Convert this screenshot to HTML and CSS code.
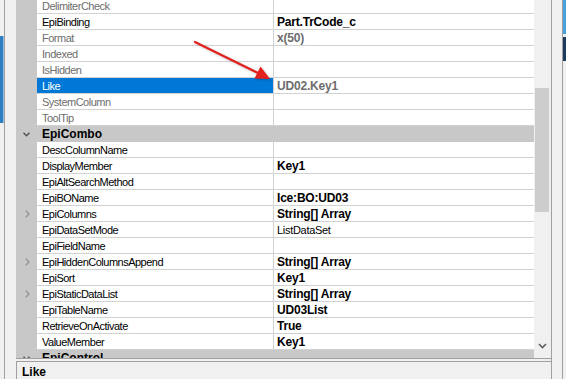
FILE: index.html
```html
<!DOCTYPE html>
<html lang="en">
<head>
  <meta charset="UTF-8" />
  <title>Properties</title>
  <link rel="stylesheet" href="styles.css">
</head>
<body>
  <div class="app">
    <div class="edge-left"><div class="peek"></div></div>
    <div class="gutter"></div>

    <div class="main">
      <div class="grid-wrap">
        <div class="grid">
          <div class="rows">
            <div class="row dim"><div class="mark"></div><div class="name">DelimiterCheck</div><div class="val"></div></div>
            <div class="row"><div class="mark"></div><div class="name">EpiBinding</div><div class="val bold">Part.TrCode_c</div></div>
            <div class="row dim"><div class="mark"></div><div class="name">Format</div><div class="val bold">x(50)</div></div>
            <div class="row dim"><div class="mark"></div><div class="name">Indexed</div><div class="val"></div></div>
            <div class="row dim"><div class="mark"></div><div class="name">IsHidden</div><div class="val"></div></div>
            <div class="row dim sel"><div class="mark"></div><div class="name">Like</div><div class="val bold">UD02.Key1</div></div>
            <div class="row dim"><div class="mark"></div><div class="name">SystemColumn</div><div class="val"></div></div>
            <div class="row dim"><div class="mark"></div><div class="name">ToolTip</div><div class="val"></div></div>

            <div class="row cat">
              <div class="mark"><svg width="7" height="5" viewBox="0 0 7 5"><path d="M0.5 0.8 L3.5 3.8 L6.5 0.8" fill="none" stroke="#505050" stroke-width="1.3"/></svg></div>
              <div class="cat-name">EpiCombo</div>
            </div>
            <div class="row old"><div class="mark"></div><div class="name">DescColumnName</div><div class="val"></div></div>
            <div class="row old"><div class="mark"></div><div class="name">DisplayMember</div><div class="val bold">Key1</div></div>
            <div class="row old"><div class="mark"></div><div class="name">EpiAltSearchMethod</div><div class="val"></div></div>
            <div class="row old"><div class="mark"></div><div class="name">EpiBOName</div><div class="val bold">Ice:BO:UD03</div></div>
            <div class="row old"><div class="mark"><svg class="more" width="5" height="8" viewBox="0 0 5 8"><path d="M0.8 0.6 L4 4 L0.8 7.4" fill="none" stroke="#8c8c8c" stroke-width="1.2"/></svg></div><div class="name">EpiColumns</div><div class="val bold">String[] Array</div></div>
            <div class="row old"><div class="mark"></div><div class="name">EpiDataSetMode</div><div class="val">ListDataSet</div></div>
            <div class="row old"><div class="mark"></div><div class="name">EpiFieldName</div><div class="val"></div></div>
            <div class="row old"><div class="mark"><svg class="more" width="5" height="8" viewBox="0 0 5 8"><path d="M0.8 0.6 L4 4 L0.8 7.4" fill="none" stroke="#8c8c8c" stroke-width="1.2"/></svg></div><div class="name">EpiHiddenColumnsAppend</div><div class="val bold">String[] Array</div></div>
            <div class="row old"><div class="mark"></div><div class="name">EpiSort</div><div class="val bold">Key1</div></div>
            <div class="row old"><div class="mark"><svg class="more" width="5" height="8" viewBox="0 0 5 8"><path d="M0.8 0.6 L4 4 L0.8 7.4" fill="none" stroke="#8c8c8c" stroke-width="1.2"/></svg></div><div class="name">EpiStaticDataList</div><div class="val bold">String[] Array</div></div>
            <div class="row old"><div class="mark"></div><div class="name">EpiTableName</div><div class="val bold">UD03List</div></div>
            <div class="row old"><div class="mark"></div><div class="name">RetrieveOnActivate</div><div class="val bold">True</div></div>
            <div class="row old"><div class="mark"></div><div class="name">ValueMember</div><div class="val bold">Key1</div></div>

            <div class="row cat">
              <div class="mark"><svg width="7" height="5" viewBox="0 0 7 5"><path d="M0.5 0.8 L3.5 3.8 L6.5 0.8" fill="none" stroke="#505050" stroke-width="1.3"/></svg></div>
              <div class="cat-name">EpiControl</div>
            </div>
          </div>
        </div>

        <div class="scroll">
          <div class="thumb"></div>
          <div class="down"><svg width="9" height="6" viewBox="0 0 9 6"><path d="M1 1 L4.5 4.5 L8 1" fill="none" stroke="#606060" stroke-width="1.6"/></svg></div>
        </div>
      </div>

      <div class="desc">Like</div>
    </div>

    <div class="edge-right"></div>
    <div class="peek-right">
      <div class="pr-light"></div>
      <div class="pr-dark"></div>
    </div>
  </div>

  <!-- annotation arrow drawn over the grid -->
  <svg class="arrow" width="566" height="379" viewBox="0 0 566 379">
    <line x1="195" y1="42" x2="259" y2="73.5" stroke="#e3201b" stroke-width="2.2" stroke-linecap="round"/>
    <polygon points="270,79 254.5,78.5 260.5,66.5" fill="#e3201b"/>
  </svg>
</body>
</html>
```

FILE: styles.css
```css
body { margin: 0; background: #f0f0f0; font-family: "Liberation Sans", Arial, sans-serif; font-size: 11px; color: #000; overflow: hidden; }
.app { display: flex; width: 566px; height: 379px; }

.edge-left { width: 4px; padding-top: 36px; border-right: 1px solid #a0a0a0; }
.peek { height: 87px; background: #2f7fc0; border-right: 1px solid #8cc0e6; }
.gutter { width: 11px; }

.main { width: 535px; display: flex; flex-direction: column; border-right: 1px solid #a0a0a0; }
.grid-wrap { display: flex; height: 358px; border-bottom: 1px solid #a0a0a0; flex: none; }
.grid { width: 518px; overflow: hidden; background: #fff; }
.rows { margin-top: -2px; }

.row { display: flex; height: 16px; }
.mark { width: 21px; flex: none; background: #c8c8c8; display: flex; align-items: center; justify-content: center; }
.mark .more { margin-left: 1px; }
.name { width: 237px; flex: none; box-sizing: border-box; padding: 1px 0 0 5px; border-right: 1px solid #d2d2d2; border-bottom: 1px solid #d2d2d2; line-height: 14px; letter-spacing: -0.5px; white-space: nowrap; }
.val { flex: 1; padding: 1px 0 0 3px; border-bottom: 1px solid #d2d2d2; line-height: 14px; letter-spacing: -0.3px; white-space: nowrap; }
.val.bold { font-weight: bold; font-size: 12px; letter-spacing: -0.2px; }
.dim .name, .dim .val { color: #6d6d6d; }
.sel .name { background: #0078d7; color: #fff; }

.cat { background: #c8c8c8; }
.cat-name { padding: 1px 0 0 5px; font-weight: bold; font-size: 12px; line-height: 14px; border-bottom: 1px solid #c8c8c8; flex: 1; }

.scroll { width: 17px; display: flex; flex-direction: column; background: #f0f0f0; }
.thumb { margin: 88px 2px 0 1px; height: 124px; background: #cdcdcd; }
.down { margin-top: auto; height: 16px; display: flex; align-items: center; justify-content: center; padding-bottom: 4px; }

.desc { flex: 1; margin-top: 2px; border-top: 1px solid #a0a0a0; border-left: 1px solid #a0a0a0; padding: 3px 0 0 5px; font-weight: bold; font-size: 12px; }

.edge-right { width: 10px; border-right: 1px solid #a0a0a0; }
.peek-right { flex: 1; display: flex; flex-direction: column; }
.pr-light { height: 34px; background: #45a2dc; }
.pr-dark { height: 24px; margin-top: 3px; background: #1d3b5c; }

.arrow { position: absolute; left: 0; top: 0; pointer-events: none; filter: drop-shadow(1px 1px 1px rgba(0,0,0,0.25)); }
```
